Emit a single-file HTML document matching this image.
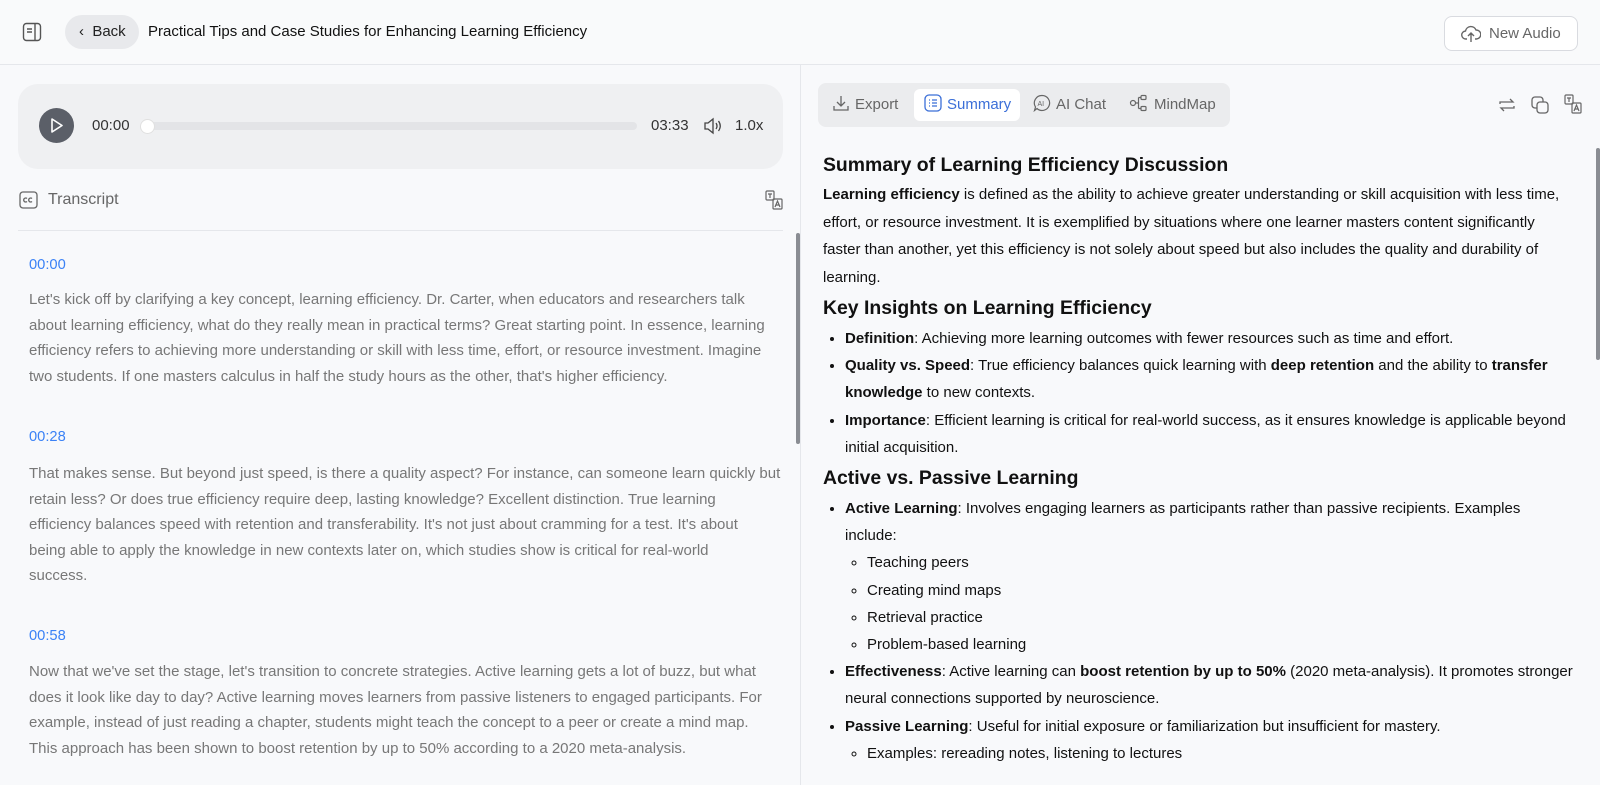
<!DOCTYPE html>
<html><head><meta charset="utf-8"><style>
*{box-sizing:border-box;margin:0;padding:0}
body{width:1600px;height:785px;overflow:hidden;background:#f8f9fb;font-family:"Liberation Sans",sans-serif;color:#222;position:relative}
.hdr{position:absolute;left:0;top:0;width:1600px;height:65px;border-bottom:1px solid #e5e7eb;background:#f9fafb}
.back{position:absolute;left:65px;top:15px;width:74px;height:34px;border-radius:17px;background:#e8e9ec;font-size:15px;color:#222;line-height:34px;padding-left:14px}
.title{position:absolute;left:148px;top:23px;font-size:15px;color:#111}
.newa{position:absolute;left:1444px;top:16px;width:134px;height:35px;border:1px solid #d9dbe0;border-radius:8px;background:#fff;font-size:15px;color:#666;line-height:33px;padding-left:44px}
.divider{position:absolute;left:800px;top:65px;width:1px;height:720px;background:#e5e7eb}
.player{position:absolute;left:18px;top:84px;width:765px;height:85px;border-radius:20px;background:#eff0f2}
.play{position:absolute;left:21px;top:24px;width:35px;height:35px;border-radius:50%;background:#5b5f68}
.t{position:absolute;font-size:15px;color:#333;top:33px}
.bar{position:absolute;left:131px;top:38px;width:488px;height:8px;border-radius:4px;background:#e3e4e7}
.knob{position:absolute;left:122px;top:35px;width:15px;height:15px;border-radius:50%;background:#fff;border:1px solid #e0e0e0}
.trans{position:absolute;left:48px;top:191px;font-size:16px;color:#666}
.sep{position:absolute;left:18px;top:230px;width:765px;height:1px;background:#e5e7eb}
.lc{position:absolute;left:29px;font-size:15px;color:#777;line-height:25.5px;width:770px;white-space:nowrap}
.ts{position:absolute;left:29px;color:#3b82f6;font-size:14.7px}
.sb{position:absolute;width:4px;border-radius:2px;background:#8a8d93}
.tabs{position:absolute;left:818px;top:83px;width:412px;height:44px;border-radius:8px;background:#ebecee}
.tab{position:absolute;top:6px;height:32px;line-height:32px;font-size:15px;color:#666}
.tab.on{background:#fff;border-radius:6px;color:#3b6fd8}
.rc{position:absolute;left:823px;top:151px;width:756px;font-size:15px;color:#111}
.rc h2{font-size:19.4px;font-weight:bold;line-height:28px;margin:0}
.rc p{line-height:27.5px;margin-top:2px}
.rc ul{padding-left:22px;line-height:27.2px;margin-top:3px}
.rc ul ul{padding-left:22px;margin-top:0}
</style></head><body>
<div class="hdr">
<svg style="position:absolute;left:22px;top:22px" width="20" height="20" viewBox="0 0 20 20" fill="none" stroke="#555" stroke-width="1.4"><rect x="1.5" y="1.5" width="17" height="17" rx="3"/><path d="M13 2v16M5 7h5M5 10h5"/></svg>
<div class="back">‹&nbsp; Back</div>
<div class="title">Practical Tips and Case Studies for Enhancing Learning Efficiency</div>
<div class="newa"><svg style="position:absolute;left:16px;top:8px" width="20" height="18" viewBox="0 0 20 18" fill="none" stroke="#666" stroke-width="1.4"><path d="M6 14H5a4 4 0 0 1-.5-8A5.5 5.5 0 0 1 15 5a4 4 0 0 1 .5 9H14M10 8v9M7 11l3-3 3 3"/></svg>New Audio</div>
</div>
<div class="player">
<div class="play"><svg style="position:absolute;left:11px;top:9px" width="14" height="17" viewBox="0 0 14 17" fill="none" stroke="#fff" stroke-width="1.6"><path d="M2 2l10 6.5L2 15z" stroke-linejoin="round"/></svg></div>
<div class="t" style="left:74px">00:00</div>
<div class="bar"></div><div class="knob"></div>
<div class="t" style="left:633px">03:33</div>
<svg style="position:absolute;left:685px;top:33px" width="20" height="18" viewBox="0 0 20 18" fill="none" stroke="#444" stroke-width="1.3"><path d="M2 6h3l5-4v14l-5-4H2zM13 6q2 3 0 6M15.5 4q3.5 5 0 10"/></svg>
<div class="t" style="left:717px">1.0x</div>
</div>
<svg style="position:absolute;left:19px;top:191px" width="19" height="18" viewBox="0 0 19 18" fill="none" stroke="#666" stroke-width="1.3"><rect x="1" y="1" width="17" height="16" rx="3"/><path d="M8 7.5a2 2 0 1 0 0 3M13 7.5a2 2 0 1 0 0 3"/></svg>
<div class="trans">Transcript</div>
<svg style="position:absolute;left:765px;top:190px" width="18" height="20" viewBox="0 0 18 20" fill="none" stroke="#666" stroke-width="1.2"><rect x="1" y="1" width="8" height="9" rx="1"/><rect x="8" y="9" width="9" height="10" rx="1"/><path d="M3 4h4M5 4v4M10 17l2.5-6 2.5 6M11 15h3"/></svg>
<div class="sep"></div>
<div class="ts" style="top:257px">00:00</div>
<div class="lc" style="top:287px">Let's kick off by clarifying a key concept, learning efficiency. Dr. Carter, when educators and researchers talk<br>about learning efficiency, what do they really mean in practical terms? Great starting point. In essence, learning<br>efficiency refers to achieving more understanding or skill with less time, effort, or resource investment. Imagine<br>two students. If one masters calculus in half the study hours as the other, that's higher efficiency.</div>
<div class="ts" style="top:429px">00:28</div>
<div class="lc" style="top:461px">That makes sense. But beyond just speed, is there a quality aspect? For instance, can someone learn quickly but<br>retain less? Or does true efficiency require deep, lasting knowledge? Excellent distinction. True learning<br>efficiency balances speed with retention and transferability. It's not just about cramming for a test. It's about<br>being able to apply the knowledge in new contexts later on, which studies show is critical for real-world<br>success.</div>
<div class="ts" style="top:628px">00:58</div>
<div class="lc" style="top:659px">Now that we've set the stage, let's transition to concrete strategies. Active learning gets a lot of buzz, but what<br>does it look like day to day? Active learning moves learners from passive listeners to engaged participants. For<br>example, instead of just reading a chapter, students might teach the concept to a peer or create a mind map.<br>This approach has been shown to boost retention by up to 50% according to a 2020 meta-analysis.</div>
<div class="sb" style="left:796px;top:233px;height:211px"></div>
<div class="divider"></div>
<div class="tabs">
<div class="tab" style="left:14px"><svg style="vertical-align:-3px;margin-right:5px" width="18" height="18" viewBox="0 0 18 18" fill="none" stroke="#666" stroke-width="1.3"><path d="M9 2v10M5 8l4 4 4-4M2 12v4h14v-4"/></svg>Export</div>
<div class="tab on" style="left:96px;width:106px;padding-left:10px"><svg style="vertical-align:-3px;margin-right:5px" width="18" height="18" viewBox="0 0 18 18" fill="none" stroke="#3b6fd8" stroke-width="1.3"><rect x="1" y="1" width="16" height="16" rx="4"/><path d="M5 6h1M8 6h5M5 9h1M8 9h5M5 12h1M8 12h5"/></svg>Summary</div>
<div class="tab" style="left:215px"><svg style="vertical-align:-3px;margin-right:5px" width="18" height="18" viewBox="0 0 18 18" fill="none" stroke="#666" stroke-width="1.2"><path d="M9 1.5a7.5 7.5 0 1 1-5 13L1.5 16.5l1-3.5A7.5 7.5 0 0 1 9 1.5z"/><text x="4.5" y="12" font-size="7" fill="#666" stroke="none" font-family="Liberation Sans">AI</text></svg>AI Chat</div>
<div class="tab" style="left:311px"><svg style="vertical-align:-3px;margin-right:5px" width="20" height="18" viewBox="0 0 20 18" fill="none" stroke="#666" stroke-width="1.2"><circle cx="4" cy="9" r="2.5"/><rect x="12" y="1.5" width="5" height="4" rx="1"/><rect x="12" y="12.5" width="5" height="4" rx="1"/><path d="M6.5 9h3M9.5 3.5v11M9.5 3.5h2.5M9.5 14.5h2.5"/></svg>MindMap</div>
</div>
<svg style="position:absolute;left:1497px;top:95px" width="20" height="20" viewBox="0 0 20 20" fill="none" stroke="#666" stroke-width="1.3"><path d="M3 9V7h13l-3-3M17 11v2H4l3 3"/></svg>
<svg style="position:absolute;left:1530px;top:95px" width="20" height="20" viewBox="0 0 20 20" fill="none" stroke="#666" stroke-width="1.3"><rect x="2" y="2" width="11" height="11" rx="3"/><rect x="7" y="7" width="11" height="11" rx="3" fill="#f8f9fb"/></svg>
<svg style="position:absolute;left:1564px;top:94px" width="18" height="20" viewBox="0 0 18 20" fill="none" stroke="#666" stroke-width="1.2"><rect x="1" y="1" width="8" height="9" rx="1"/><rect x="8" y="9" width="9" height="10" rx="1"/><path d="M3 4h4M5 4v4M10 17l2.5-6 2.5 6M11 15h3"/></svg>
<div class="rc">
<h2>Summary of Learning Efficiency Discussion</h2>
<p><b>Learning efficiency</b> is defined as the ability to achieve greater understanding or skill acquisition with less time,<br>effort, or resource investment. It is exemplified by situations where one learner masters content significantly<br>faster than another, yet this efficiency is not solely about speed but also includes the quality and durability of<br>learning.</p>
<h2 style="margin-top:3px">Key Insights on Learning Efficiency</h2>
<ul><li><b>Definition</b>: Achieving more learning outcomes with fewer resources such as time and effort.</li>
<li><b>Quality vs. Speed</b>: True efficiency balances quick learning with <b>deep retention</b> and the ability to <b>transfer<br>knowledge</b> to new contexts.</li>
<li><b>Importance</b>: Efficient learning is critical for real-world success, as it ensures knowledge is applicable beyond<br>initial acquisition.</li></ul>
<h2 style="margin-top:3px">Active vs. Passive Learning</h2>
<ul><li><b>Active Learning</b>: Involves engaging learners as participants rather than passive recipients. Examples<br>include:
<ul><li>Teaching peers</li><li>Creating mind maps</li><li>Retrieval practice</li><li>Problem-based learning</li></ul></li>
<li><b>Effectiveness</b>: Active learning can <b>boost retention by up to 50%</b> (2020 meta-analysis). It promotes stronger<br>neural connections supported by neuroscience.</li>
<li><b>Passive Learning</b>: Useful for initial exposure or familiarization but insufficient for mastery.
<ul><li>Examples: rereading notes, listening to lectures</li></ul></li></ul>
</div>
<div class="sb" style="left:1596px;top:148px;height:212px"></div>
</body></html>
